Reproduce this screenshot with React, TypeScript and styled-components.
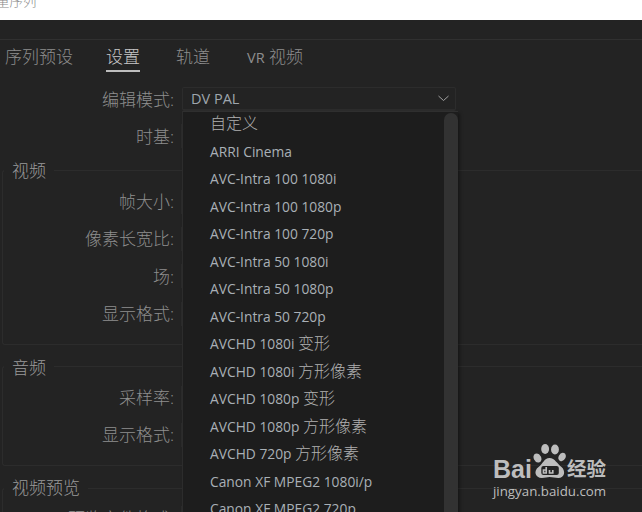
import React from "react";
import styled, { createGlobalStyle } from "styled-components";

const GlobalStyle = createGlobalStyle`
  html, body {
    margin: 0;
    padding: 0;
    background: #fff;
  }
`;

const FONT = `"Open Sans", "Noto Sans CJK SC", sans-serif`;

const Page = styled.div`
  position: relative;
  width: 642px;
  height: 512px;
  overflow: hidden;
  font-family: ${FONT};
  background: #232323;
`;

const TitleStrip = styled.div`
  height: 20px;
  background: #fff;
  color: #8a8a8a;
  font-size: 13.5px;
  line-height: 2px;
  overflow: hidden;
  text-indent: -4px;
  font-weight: 300;
`;

const HeaderBar = styled.div`
  height: 19px;
  border-bottom: 1px solid #303030;
`;

const Tabs = styled.div`
  display: flex;
  height: 35px;
  padding-left: 5px;
  gap: 36px;
  align-items: flex-start;
`;

const Tab = styled.div<{ $active?: boolean }>`
  font-size: 17px;
  font-weight: 300;
  line-height: 34px;
  height: 32px;
  box-sizing: border-box;
  color: ${(p) => (p.$active ? "#c8c8c8" : "#8e8e8e")};
  border-bottom: ${(p) => (p.$active ? "2px solid #bdbdbd" : "none")};
  margin-left: ${(p) => (p.$active ? "-3px" : "0")};
`;

const TabLatin = styled.span`
  font-size: 14.5px;
  font-weight: 400;
  margin-left: 1px;
`;

const Row = styled.div<{ $h: number }>`
  display: flex;
  align-items: center;
  height: ${(p) => p.$h}px;
`;

const Label = styled.div`
  width: 174px;
  flex: none;
  text-align: right;
  font-size: 17px;
  font-weight: 300;
  color: #8e8e8e;
  white-space: nowrap;
  padding-bottom: 2px;
`;

const Select = styled.div`
  margin-left: 8px;
  width: 274px;
  height: 24px;
  box-sizing: border-box;
  border: 1px solid #2c2c2c;
  border-bottom-width: 2px;
  border-radius: 2px;
  display: flex;
  align-items: center;
  justify-content: space-between;
  padding: 0 6px 0 8px;
  color: #9fa6ad;
  font-size: 14.5px;
`;

const FieldEdge = styled.div`
  margin-left: 7px;
  width: 1px;
  height: 24px;
  background: #2b2b2b;
`;

const Group = styled.div<{ $h: number; $top: number }>`
  position: relative;
  margin-top: ${(p) => p.$top}px;
  margin-left: 2px;
  height: ${(p) => p.$h}px;
  box-sizing: border-box;
  border-left: 1px solid #2c2c2c;
  border-top: 1px solid #2c2c2c;
  border-bottom: 1px solid #2c2c2c;
  border-radius: 3px 0 0 3px;
`;

const GroupTitle = styled.div<{ $up?: number }>`
  position: absolute;
  left: 1px;
  top: ${(p) => -11 - (p.$up ?? 0)}px;
  padding: 0 8px;
  line-height: 24px;
  background: #232323;
  color: #9a9a9a;
  font-size: 17px;
  font-weight: 300;
`;

const GroupBody = styled.div`
  margin-left: -3px;
`;

const Dropdown = styled.div`
  position: absolute;
  left: 182px;
  top: 111px;
  width: 276px;
  height: 420px;
  box-sizing: border-box;
  background: #1d1d1d;
  border-left: 1px solid #2c2c2c;
  border-top: 1px solid #2f2f2f;
  box-shadow: 2px 2px 3px rgba(0, 0, 0, 0.35);
`;

const ItemList = styled.div`
  margin-top: -2px;
`;

const Item = styled.div`
  height: 27.5px;
  line-height: 27.5px;
  padding-left: 27px;
  font-size: 13.8px;
  color: #a9b0b6;
  white-space: nowrap;
`;

const ItemCjk = styled.span`
  font-size: 16px;
  font-weight: 300;
  color: #b0b0b0;
`;

const Thumb = styled.div`
  position: absolute;
  right: 0;
  top: 1px;
  width: 14px;
  bottom: 0;
  background: #323232;
  border-radius: 7px 7px 0 0;
`;

const Watermark = styled.div`
  position: absolute;
  left: 493px;
  top: 442px;
  width: 130px;
  color: #bdbdbd;
`;

const LogoRow = styled.div`
  display: flex;
  align-items: flex-end;
  height: 38px;
`;

const LogoWord = styled.span`
  font-family: "Liberation Sans", sans-serif;
  font-weight: 700;
  font-size: 25px;
  line-height: 22px;
`;

const LogoCn = styled.span`
  font-size: 19.5px;
  line-height: 23px;
  font-weight: 700;
`;

const LogoSite = styled.div`
  font-family: "Open Sans", sans-serif;
  font-size: 13.3px;
  line-height: 16px;
  margin-top: 3px;
  white-space: nowrap;
`;

const items: [string, string][] = [
  ["", "自定义"],
  ["ARRI Cinema", ""],
  ["AVC-Intra 100 1080i", ""],
  ["AVC-Intra 100 1080p", ""],
  ["AVC-Intra 100 720p", ""],
  ["AVC-Intra 50 1080i", ""],
  ["AVC-Intra 50 1080p", ""],
  ["AVC-Intra 50 720p", ""],
  ["AVCHD 1080i ", "变形"],
  ["AVCHD 1080i ", "方形像素"],
  ["AVCHD 1080p ", "变形"],
  ["AVCHD 1080p ", "方形像素"],
  ["AVCHD 720p ", "方形像素"],
  ["Canon XF MPEG2 1080i/p", ""],
  ["Canon XF MPEG2 720p", ""],
];

const Chevron = () => (
  <svg width="11" height="7" viewBox="0 0 11 7" fill="none">
    <path d="M0.5 1 L5.5 5.5 L10.5 1" stroke="#a0a0a0" strokeWidth="1" />
  </svg>
);

const Paw = () => (
  <svg width="35" height="38" viewBox="0 0 32 38" fill="#bdbdbd" preserveAspectRatio="none">
    <ellipse cx="5" cy="16" rx="3.4" ry="4.6" transform="rotate(-25 5 16)" />
    <ellipse cx="12" cy="7" rx="3.6" ry="5" />
    <ellipse cx="21" cy="7.5" rx="3.6" ry="5" />
    <ellipse cx="27.5" cy="15" rx="3.2" ry="4.4" transform="rotate(25 27.5 15)" />
    <path d="M16 16 C11 16 10 22 6 25 C1 29 3 36 9 36 C12 36 14 35 16 35 C19 35 21 36 24 36 C30 36 31 29 27 25 C23 22 21 16 16 16 Z" />
    <rect x="8.5" y="24" width="16" height="9" rx="2" fill="#232323" />
    <path d="M13 25 V31 H10.5 V28 H13 M16 28 V31 H19 V28" fill="none" stroke="#bdbdbd" strokeWidth="1.5" />
  </svg>
);

export default function App() {
  return (
    <>
      <GlobalStyle />
      <Page>
        <TitleStrip>重序列</TitleStrip>
        <HeaderBar />
        <Tabs>
          <Tab>序列预设</Tab>
          <Tab $active>设置</Tab>
          <Tab>轨道</Tab>
          <Tab>
            <TabLatin>VR</TabLatin> 视频
          </Tab>
        </Tabs>
        <Row $h={48}>
          <Label>编辑模式:</Label>
          <Select>
            DV PAL
            <Chevron />
          </Select>
        </Row>
        <Row $h={26}>
          <Label>时基:</Label>
          <FieldEdge />
        </Row>
        <Group $h={175} $top={21}>
          <GroupTitle $up={1}>视频</GroupTitle>
          <GroupBody>
            <Row $h={12} />
            <Row $h={37}>
              <Label>帧大小:</Label>
              <FieldEdge />
            </Row>
            <Row $h={37}>
              <Label>像素长宽比:</Label>
              <FieldEdge />
            </Row>
            <Row $h={38}>
              <Label>场:</Label>
              <FieldEdge />
            </Row>
            <Row $h={37}>
              <Label>显示格式:</Label>
              <FieldEdge />
            </Row>
          </GroupBody>
        </Group>
        <Group $h={100} $top={21}>
          <GroupTitle>音频</GroupTitle>
          <GroupBody>
            <Row $h={12} />
            <Row $h={37}>
              <Label>采样率:</Label>
              <FieldEdge />
            </Row>
            <Row $h={37}>
              <Label>显示格式:</Label>
              <FieldEdge />
            </Row>
          </GroupBody>
        </Group>
        <Group $h={60} $top={22}>
          <GroupTitle $up={2}>视频预览</GroupTitle>
          <GroupBody>
            <Row $h={12} />
            <Row $h={34}>
              <Label>预览文件格式:</Label>
              <FieldEdge />
            </Row>
          </GroupBody>
        </Group>
        <Dropdown>
          <ItemList>
            {items.map(([latin, cjk]) => (
              <Item key={latin + cjk}>
                {latin}
                {cjk && <ItemCjk>{cjk}</ItemCjk>}
              </Item>
            ))}
          </ItemList>
          <Thumb />
        </Dropdown>
        <Watermark>
          <LogoRow>
            <LogoWord>Bai</LogoWord>
            <Paw />
            <LogoCn>经验</LogoCn>
          </LogoRow>
          <LogoSite>jingyan.baidu.com</LogoSite>
        </Watermark>
      </Page>
    </>
  );
}
